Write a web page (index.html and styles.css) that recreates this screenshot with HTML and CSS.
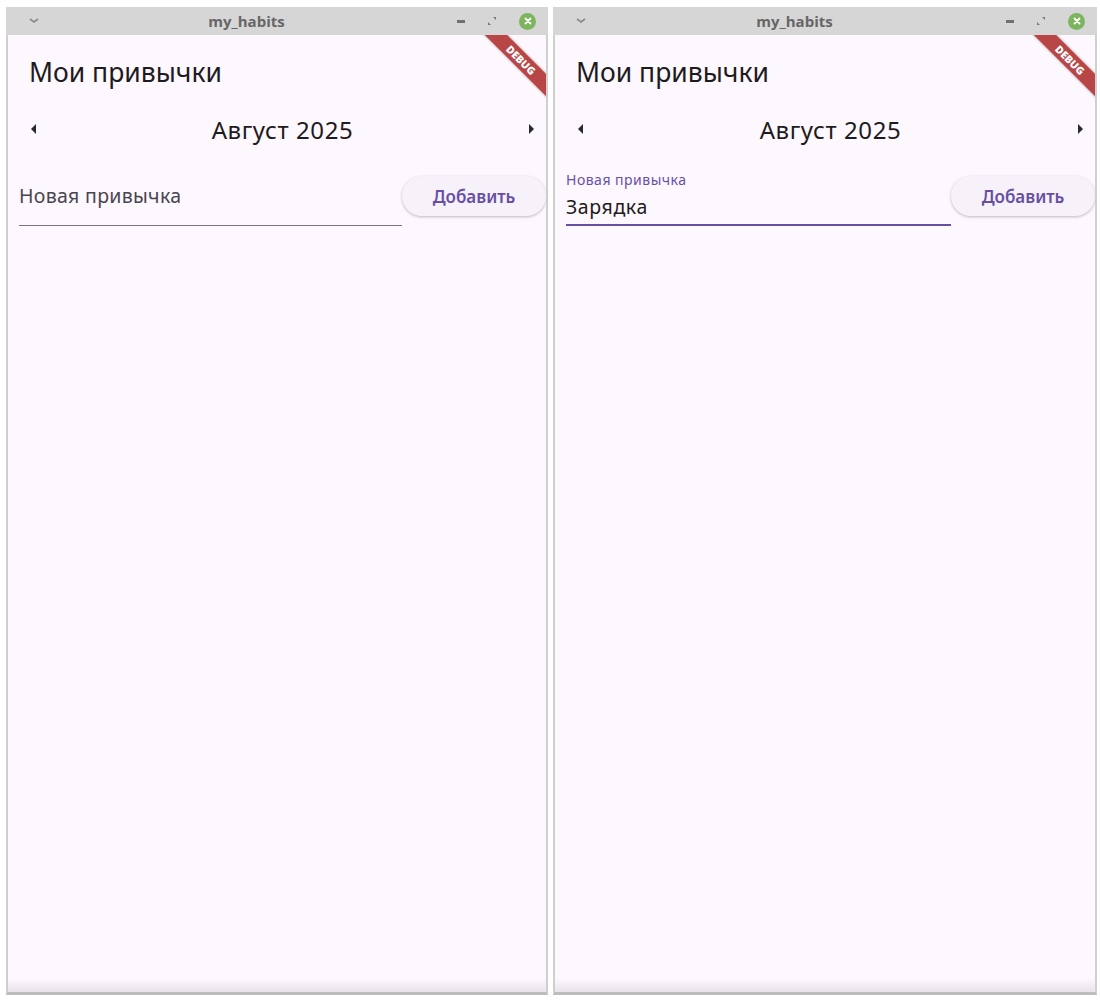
FILE: index.html
```html
<!DOCTYPE html>
<html>
  <head>
    <meta charset="utf-8">
    <title>my_habits</title>
    <link rel="stylesheet" href="styles.css">
  </head>
  <body>
    <div class="desktop">
      <!-- window 1: empty field -->
      <div class="window win-left">
        <div class="titlebar">
          <span class="tb-menu">
            <svg width="12" height="8" viewBox="0 0 12 8"><path d="M2 2 L6 5 L10 2" fill="none" stroke="#8a8a8a" stroke-width="1.6"/></svg>
          </span>
          <span class="tb-title">my_habits</span>
          <span class="tb-buttons">
            <span class="tb-min"></span>
            <svg class="tb-max" width="10" height="10" viewBox="0 0 10 10"><path d="M6 1 L9 1 L9 4 Z M4 9 L1 9 L1 6 Z" fill="#7a7a7a"/></svg>
            <span class="tb-close">
              <svg width="8" height="8" viewBox="0 0 8 8"><path d="M1.5 1.5 L6.5 6.5 M6.5 1.5 L1.5 6.5" stroke="#fff" stroke-width="1.8" stroke-linecap="round"/></svg>
            </span>
          </span>
        </div>
        <div class="content">
          <h1 class="app-title">Мои привычки</h1>
          <div class="month-row">
            <button class="arrow arrow-left"><svg width="8" height="10" viewBox="0 0 8 10"><path d="M6 0 L1 5 L6 10 Z" fill="#2b2930"/></svg></button>
            <span class="month">Август 2025</span>
            <button class="arrow arrow-right"><svg width="8" height="10" viewBox="0 0 8 10"><path d="M2 0 L7 5 L2 10 Z" fill="#2b2930"/></svg></button>
          </div>
          <div class="add-row">
            <div class="field">
              <span class="hint">Новая привычка</span>
            </div>
            <button class="add-btn">Добавить</button>
          </div>
          <div class="banner-wrap"><div class="banner">DEBUG</div></div>
          <div class="bottom-fade"></div>
        </div>
      </div>

      <!-- window 2: focused field with text -->
      <div class="window win-right">
        <div class="titlebar">
          <span class="tb-menu">
            <svg width="12" height="8" viewBox="0 0 12 8"><path d="M2 2 L6 5 L10 2" fill="none" stroke="#8a8a8a" stroke-width="1.6"/></svg>
          </span>
          <span class="tb-title">my_habits</span>
          <span class="tb-buttons">
            <span class="tb-min"></span>
            <svg class="tb-max" width="10" height="10" viewBox="0 0 10 10"><path d="M6 1 L9 1 L9 4 Z M4 9 L1 9 L1 6 Z" fill="#7a7a7a"/></svg>
            <span class="tb-close">
              <svg width="8" height="8" viewBox="0 0 8 8"><path d="M1.5 1.5 L6.5 6.5 M6.5 1.5 L1.5 6.5" stroke="#fff" stroke-width="1.8" stroke-linecap="round"/></svg>
            </span>
          </span>
        </div>
        <div class="content">
          <h1 class="app-title">Мои привычки</h1>
          <div class="month-row">
            <button class="arrow arrow-left"><svg width="8" height="10" viewBox="0 0 8 10"><path d="M6 0 L1 5 L6 10 Z" fill="#2b2930"/></svg></button>
            <span class="month">Август 2025</span>
            <button class="arrow arrow-right"><svg width="8" height="10" viewBox="0 0 8 10"><path d="M2 0 L7 5 L2 10 Z" fill="#2b2930"/></svg></button>
          </div>
          <div class="add-row">
            <div class="field focused">
              <span class="label">Новая привычка</span>
              <span class="value">Зарядка</span>
            </div>
            <button class="add-btn">Добавить</button>
          </div>
          <div class="banner-wrap"><div class="banner">DEBUG</div></div>
          <div class="bottom-fade"></div>
        </div>
      </div>
    </div>
  </body>
</html>
```

FILE: styles.css
```css
body {
  margin: 0;
  padding: 0;
  background: #ffffff;
  font-family: "Noto Sans", "Open Sans", sans-serif;
}

.desktop {
  display: flex;
  gap: 5px;
  padding: 7px 0 0 6px;
}

.window {
  display: flex;
  flex-direction: column;
  height: 988px;
  box-sizing: border-box;
  border: 2px solid #cfcfcf;
  border-top: none;
  border-bottom: 3px solid #bdbdbd;
  background: #fdf7fe;
}

.win-left {
  width: 542px;
}

.win-right {
  width: 544px;
}

.titlebar {
  display: flex;
  align-items: center;
  height: 28px;
  margin: 0 -2px;
  padding: 0 12px 0 22px;
  background: #d6d6d6;
}

.tb-menu {
  display: flex;
  width: 14px;
}

.tb-title {
  flex: 1;
  text-align: center;
  font-family: "Open Sans", sans-serif;
  font-weight: bold;
  font-size: 15px;
  color: #666666;
  padding-left: 54px;
  margin-right: 60px;
}

.tb-buttons {
  display: flex;
  align-items: center;
  gap: 22px;
}

.tb-min {
  width: 8px;
  height: 3px;
  background: #707070;
}

.tb-close {
  display: flex;
  align-items: center;
  justify-content: center;
  width: 17px;
  height: 17px;
  border-radius: 50%;
  background: #7db55e;
}

.content {
  position: relative;
  flex: 1;
  padding: 0 0 0 11px;
  overflow: hidden;
}

.app-title {
  margin: 0;
  padding: 19px 0 0 10px;
  height: 36px;
  font-size: 26.5px;
  font-weight: normal;
  color: #1d1b20;
  line-height: 36px;
}

.month-row {
  display: flex;
  align-items: center;
  justify-content: space-between;
  margin-top: 23px;
  height: 32px;
}

.arrow {
  background: none;
  border: none;
  padding: 0;
  width: 30px;
  display: flex;
  justify-content: center;
  cursor: pointer;
}

.month {
  font-size: 24px;
  letter-spacing: 0.6px;
  color: #1d1b20;
}

.add-row {
  display: flex;
  align-items: flex-start;
  margin-top: 23px;
}

.field {
  flex: 1;
  height: 58px;
  box-sizing: border-box;
  border-bottom: 1px solid #79747e;
  position: relative;
}

.hint {
  position: absolute;
  left: 0;
  top: 14px;
  font-size: 19.5px;
  letter-spacing: 0.3px;
  color: #49454f;
}

.field.focused {
  border-bottom: 2px solid #6750a4;
}

.label {
  position: absolute;
  left: 0;
  top: 2px;
  font-size: 14px;
  letter-spacing: 0.5px;
  color: #6750a4;
}

.value {
  position: absolute;
  left: 0;
  top: 25px;
  font-size: 19.5px;
  letter-spacing: 0.6px;
  color: #1d1b20;
}

.add-btn {
  width: 144px;
  height: 40px;
  margin-top: 8px;
  border: none;
  border-radius: 20px;
  background: #f7f2fa;
  box-shadow: 0 1px 3px rgba(0, 0, 0, 0.25);
  color: #6750a4;
  font-family: "Noto Sans", sans-serif;
  font-weight: 600;
  font-size: 17px;
  cursor: pointer;
}

.banner-wrap {
  position: absolute;
  top: 0;
  right: 0;
  width: 80px;
  height: 80px;
  overflow: hidden;
}

.banner {
  position: absolute;
  left: -5px;
  top: 17px;
  width: 120px;
  height: 16px;
  line-height: 16px;
  text-align: center;
  transform: rotate(45deg);
  background: rgba(170, 30, 30, 0.82);
  box-shadow: 0 0 3px rgba(0, 0, 0, 0.3);
  color: #ffffff;
  font-family: "Open Sans", sans-serif;
  font-weight: 800;
  font-size: 10.5px;
}

.bottom-fade {
  position: absolute;
  left: 0;
  right: 0;
  bottom: 0;
  height: 14px;
  background: linear-gradient(to bottom, rgba(230, 225, 232, 0), #e8e3ea);
}
```
